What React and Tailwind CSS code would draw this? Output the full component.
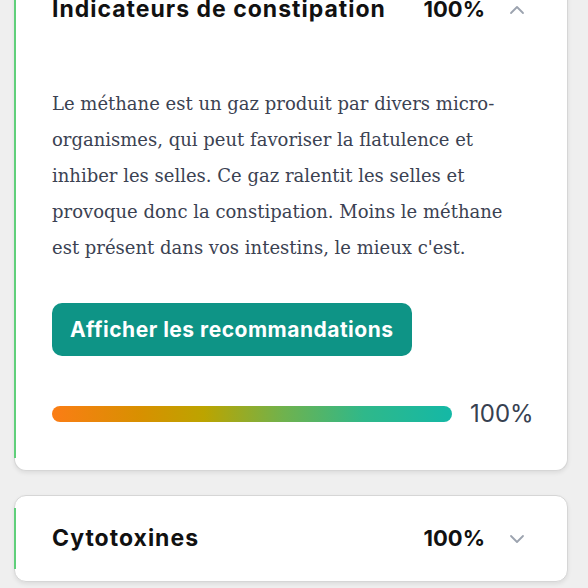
import React, { useState } from "react";

const Chevron = ({ up }) => (
  <svg
    width="24"
    height="24"
    viewBox="0 0 24 24"
    fill="none"
    stroke="#9ca3af"
    strokeWidth="1.8"
    strokeLinecap="round"
    strokeLinejoin="round"
  >
    {up ? <path d="M6 15l6-6 6 6" /> : <path d="M6 9l6 6 6-6" />}
  </svg>
);

const Card = ({ title, score, open, onToggle, children, className = "" }) => (
  <div
    className={`relative rounded-xl border border-[#d6d6d6] bg-white shadow-[0_2px_4px_rgba(0,0,0,0.08)] ${className}`}
  >
    <div className="absolute left-[-1px] top-3 bottom-3 w-[2px] bg-[#5fcf7a]" />
    <button
      onClick={onToggle}
      className="flex w-full items-center py-[26px] pl-[37px] pr-[38px] text-left"
    >
      <span className="flex-1 text-[23px] font-bold leading-[33px] tracking-[1px] text-[#111]">
        {title}
      </span>
      <span className="text-[22px] font-bold leading-[33px] text-[#111]">
        {score}
      </span>
      <span className="ml-[20px]">
        <Chevron up={open} />
      </span>
    </button>
    {open && <div className="px-[37px] pb-[38px]">{children}</div>}
  </div>
);

export default function App() {
  const [openFirst, setOpenFirst] = useState(true);
  const [openSecond, setOpenSecond] = useState(false);

  return (
    <div
      className="min-h-screen bg-[#efefef] pl-[14px] pr-[20px] pb-6"
      style={{ fontFamily: "Inter, 'Noto Sans', sans-serif" }}
    >
      <div className="flex flex-col gap-6">
        <Card
          title="Indicateurs de constipation"
          score="100%"
          open={openFirst}
          onToggle={() => setOpenFirst(!openFirst)}
          className="-mt-[33px] rounded-t-none border-t-0"
        >
          <p
            className="pt-[34px] text-[18px] leading-[36px] text-[#3b4252]"
            style={{ fontFamily: "'DejaVu Serif', serif" }}
          >
            Le méthane est un gaz produit par divers micro-organismes, qui peut
            favoriser la flatulence et inhiber les selles. Ce gaz ralentit les
            selles et provoque donc la constipation. Moins le méthane est présent
            dans vos intestins, le mieux c'est.
          </p>
          <button className="mt-[37px] h-[53px] rounded-[10px] bg-[#0e9486] px-[18px] text-[21px] font-bold tracking-[0.5px] text-white">
            Afficher les recommandations
          </button>
          <div className="mt-[40px] flex items-center gap-[18px]">
            <div className="h-4 w-[400px] shrink-0 rounded-full bg-[linear-gradient(90deg,#fb7d15,#d89000_22%,#bca400_38%,#6fb24e_58%,#2fb88a_78%,#14b8a6)]" />
            <span className="shrink-0 text-[24px] leading-[36px] text-[#374151]">100%</span>
          </div>
        </Card>

        <Card
          title="Cytotoxines"
          score="100%"
          open={openSecond}
          onToggle={() => setOpenSecond(!openSecond)}
        >
          <p className="text-[17px] text-[#3b4252]">Aucune donnée.</p>
        </Card>
      </div>
    </div>
  );
}
